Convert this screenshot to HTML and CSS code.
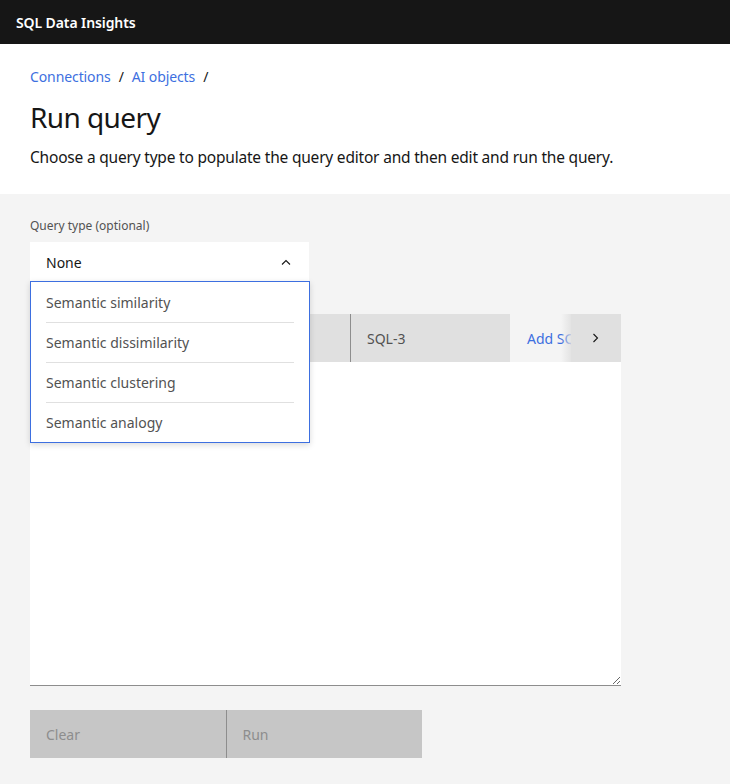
FILE: index.html
```html
<!DOCTYPE html>
<html lang="en">
<head>
<meta charset="utf-8">
<title>Run query</title>
<link rel="stylesheet" href="styles.css">
</head>
<body>
<header class="topbar">
  <span class="brand">SQL Data Insights</span>
</header>
<section class="intro">
  <nav class="breadcrumb">
    <a href="#">Connections</a><span class="sep">/</span><a href="#">AI objects</a><span class="sep">/</span>
  </nav>
  <h1 class="title">Run query</h1>
  <p class="desc">Choose a query type to populate the query editor and then edit and run the query.</p>
</section>
<main class="work">
  <div class="field">
    <label class="label">Query type (optional)</label>
    <div class="dropdown">
      <button class="dd-button">
        <span>None</span>
        <svg class="chev" width="16" height="16" viewBox="0 0 16 16"><path d="M4 10.5 L8 6.5 L12 10.5" fill="none" stroke="#161616" stroke-width="1.1"/></svg>
      </button>
      <ul class="dd-menu">
        <li><span>Semantic similarity</span></li>
        <li><span>Semantic dissimilarity</span></li>
        <li><span>Semantic clustering</span></li>
        <li><span>Semantic analogy</span></li>
      </ul>
    </div>
  </div>
  <div class="editor">
    <div class="tabs">
      <div class="tab tab-selected">SQL-1</div>
      <div class="tab">SQL-2</div>
      <div class="tab">SQL-3</div>
      <div class="tab-add">Add SQL</div>
      <button class="tab-next">
        <svg width="16" height="16" viewBox="0 0 16 16"><path d="M6.5 4 L10.5 8 L6.5 12" fill="none" stroke="#161616" stroke-width="1.1"/></svg>
      </button>
    </div>
    <textarea class="query"></textarea>
  </div>
  <div class="actions">
    <button class="btn">Clear</button>
    <button class="btn">Run</button>
  </div>
</main>
</body>
</html>
```
FILE: styles.css
```css
* { box-sizing: border-box; }
html, body { margin: 0; padding: 0; }
body {
  font-family: "Noto Sans", "Open Sans", sans-serif;
  background: #f4f4f4;
  color: #161616;
  width: 730px;
  min-height: 784px;
}
.topbar {
  height: 44px;
  background: #161616;
  display: flex;
  align-items: center;
  padding: 0 16px;
}
.brand {
  color: #ffffff;
  font-weight: 600;
  font-size: 14px;
  letter-spacing: -0.1px;
}
.intro {
  background: #ffffff;
  padding: 24px 30px 25px;
}
.breadcrumb {
  font-size: 14px;
  line-height: 18px;
  display: flex;
  align-items: center;
  letter-spacing: -0.1px;
}
.breadcrumb a {
  color: #3d6fe0;
  text-decoration: none;
}
.sep {
  color: #161616;
  margin: 0 8px;
}
.title {
  margin: 13px 0 0;
  font-size: 28px;
  line-height: 36px;
  font-weight: 400;
  letter-spacing: -0.6px;
  color: #161616;
}
.desc {
  margin: 10px 0 0;
  font-size: 15.5px;
  line-height: 24px;
  letter-spacing: -0.2px;
  color: #161616;
}
.work {
  padding: 24px 30px 26px;
}
.field { width: 280px; }
.label {
  display: block;
  font-size: 12px;
  line-height: 16px;
  color: #525252;
  margin-bottom: 8px;
}
.dropdown { position: relative; }
.dd-button {
  width: 279px;
  height: 40px;
  background: #ffffff;
  border: none;
  padding: 0 16px;
  display: flex;
  align-items: center;
  justify-content: space-between;
  font: inherit;
  font-size: 14px;
  color: #161616;
}
.chev { margin-right: -1px; }
.dd-menu {
  position: absolute;
  left: 0;
  top: 39px;
  width: 280px;
  margin: 0;
  padding: 0;
  list-style: none;
  background: #ffffff;
  border: 1px solid #3d6fe0;
  z-index: 5;
  box-shadow: 0 2px 6px rgba(0,0,0,0.15);
}
.dd-menu li {
  height: 40px;
  padding: 0 15px;
}
.dd-menu li span {
  display: flex;
  align-items: center;
  height: 40px;
  font-size: 14px;
  color: #525252;
  border-top: 1px solid #e0e0e0;
}
.dd-menu li:first-child span { border-top-color: transparent; }
.editor {
  margin-top: 32px;
  width: 591px;
}
.tabs {
  display: flex;
  height: 48px;
}
.tab {
  width: 160px;
  background: #e0e0e0;
  font-size: 14px;
  color: #525252;
  display: flex;
  align-items: center;
  padding-left: 16px;
  border-left: 1px solid #8d8d8d;
}
.tab:first-child { border-left: none; }
.tab-selected { background: #ffffff; }
.tab-add {
  flex: 1;
  display: flex;
  align-items: center;
  padding-left: 17px;
  font-size: 14px;
  color: #3d6fe0;
  white-space: nowrap;
  overflow: hidden;
}
.tab-next {
  position: relative;
  width: 50px;
  border: none;
  background: #e0e0e0;
  display: flex;
  align-items: center;
  justify-content: center;
  padding: 0 2px 0 0;
}
.tab-next::before {
  content: "";
  position: absolute;
  left: -10px;
  top: 0;
  bottom: 0;
  width: 12px;
  background: linear-gradient(to right, rgba(224,224,224,0), #e0e0e0);
}
.query {
  display: block;
  width: 591px;
  height: 324px;
  border: none;
  border-bottom: 1px solid #8d8d8d;
  background: #ffffff;
  margin: 0;
  resize: both;
}
.actions {
  margin-top: 24px;
  display: flex;
  width: 392px;
  height: 48px;
}
.btn {
  flex: 1;
  background: #c6c6c6;
  border: none;
  font: inherit;
  font-size: 14px;
  color: #8d8d8d;
  text-align: left;
  padding: 0 16px;
}
.btn + .btn { border-left: 1px solid #8d8d8d; }
```
